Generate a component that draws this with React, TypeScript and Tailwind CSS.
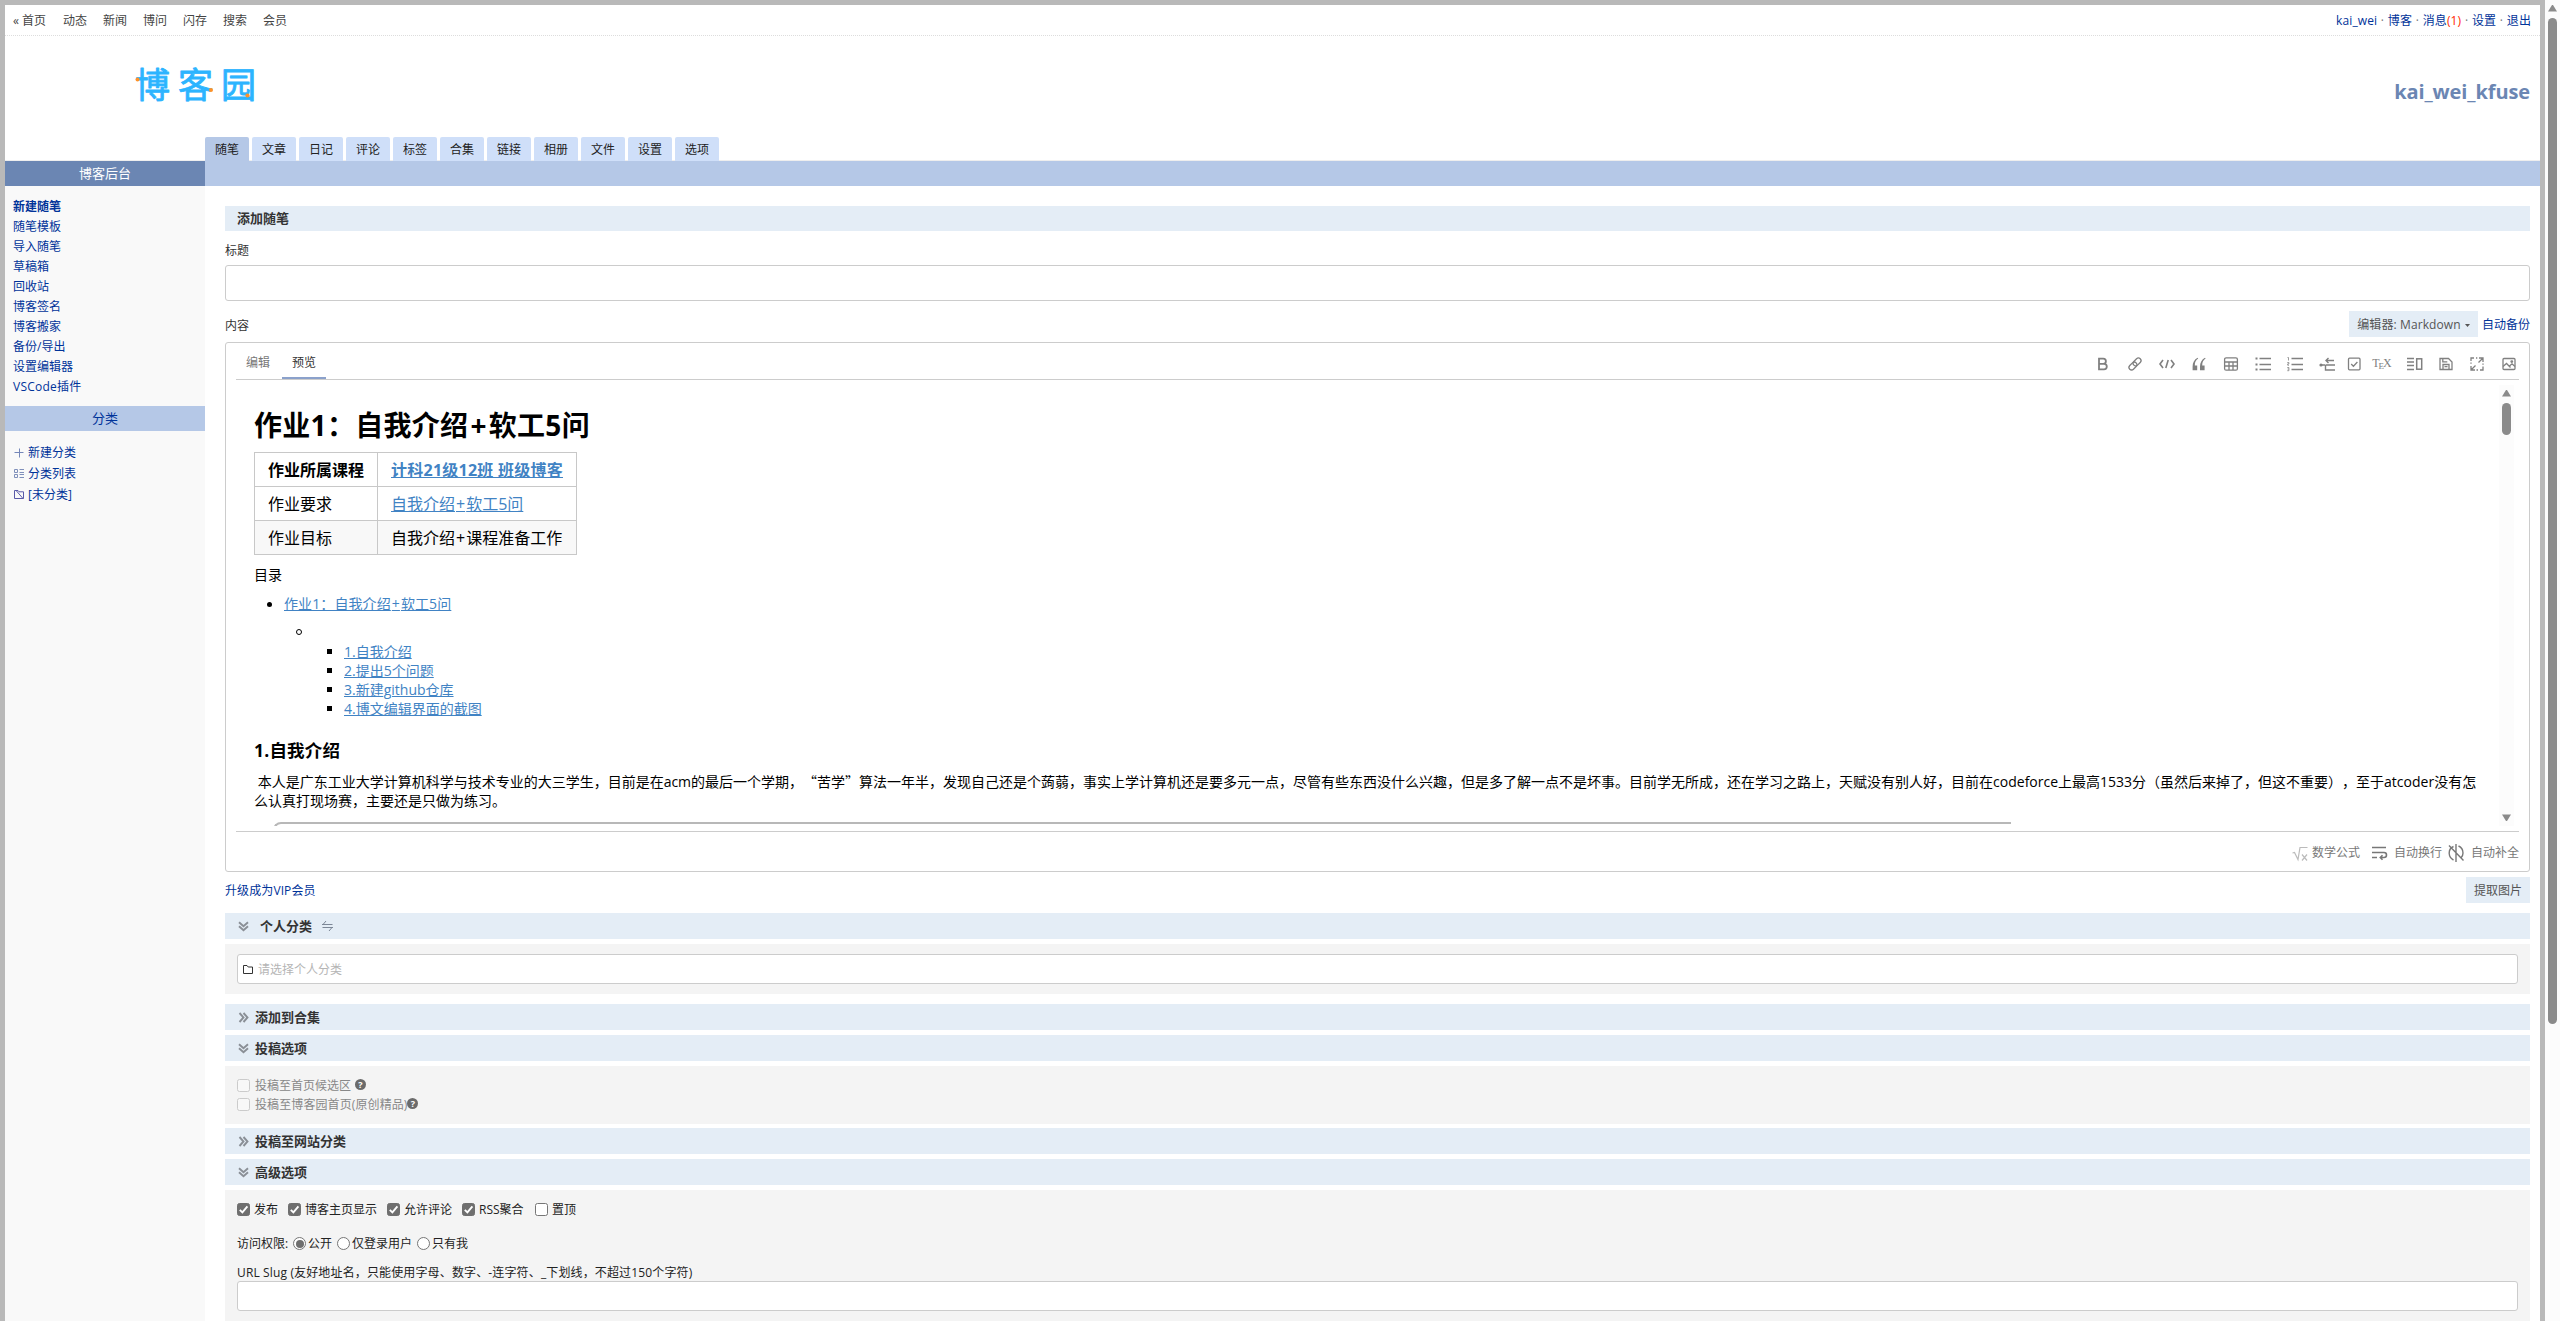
import type { ReactNode } from "react";

const topLinks = ["动态", "新闻", "博问", "闪存", "搜索", "会员"];
const tabs = ["随笔", "文章", "日记", "评论", "标签", "合集", "链接", "相册", "文件", "设置", "选项"];
const sideLinks = ["随笔模板", "导入随笔", "草稿箱", "回收站", "博客签名", "博客搬家", "备份/导出", "设置编辑器", "VSCode插件"];
const toc = ["1.自我介绍", "2.提出5个问题", "3.新建github仓库", "4.博文编辑界面的截图"];

function Icon({ w = 16, h = 16, children, className = "" }: { w?: number; h?: number; children: ReactNode; className?: string }) {
  return (
    <svg
      width={w}
      height={h}
      viewBox={`0 0 ${w} ${h}`}
      fill="none"
      stroke="currentColor"
      strokeWidth="1.3"
      className={`shrink-0 ${className}`}
    >
      {children}
    </svg>
  );
}

function Logo() {
  return (
    <svg width="130" height="64" viewBox="0 -10 130 64" className="-mt-[2px] shrink-0">
      <g
        fill="#2cb4ff"
        stroke="#2cb4ff"
        strokeWidth="0.8"
        strokeLinejoin="round"
        fontSize="35"
        fontWeight="400"
        fontFamily="'Noto Sans CJK SC', sans-serif"
      >
        <text x="2" y="34">博</text>
        <text x="45" y="34">客</text>
        <text x="88" y="34">园</text>
      </g>
      <circle cx="4.5" cy="15.500" r="2" fill="#ff9127" />
      <circle cx="78" cy="26" r="2" fill="#ff9127" />
      <circle cx="114.500" cy="31.500" r="2.100" fill="#ff9127" />
    </svg>
  );
}

function Toolbar() {
  return (
    <div className="flex items-center gap-4 text-[#808080]">
      <Icon>
        <path d="M4 2.600h4.300a2.600 2.600 0 0 1 0 5.200H4zM4 7.800h5a2.800 2.800 0 0 1 0 5.600H4z" strokeWidth="1.800" />
      </Icon>
      <Icon>
        <g transform="rotate(-45 8 8)">
          <rect x="0.600" y="5.400" width="9" height="5.200" rx="2.600" />
          <rect x="6.400" y="5.400" width="9" height="5.200" rx="2.600" />
        </g>
      </Icon>
      <Icon>
        <path d="M4 4 1 8l3 4M12 4l3 4-3 4M9.200 4 6.800 12" strokeWidth="1.600" />
      </Icon>
      <Icon>
        <path
          d="M6.600 1.800C3.200 3.400 1.600 7 1.600 10.400v3.800h4.600V9.600H3.800C3.800 6 5 4 7.200 2.600zM14 1.800C10.600 3.400 9 7 9 10.400v3.800h4.600V9.600h-2.400c0-3.600 1.200-5.600 3.400-7z"
          fill="currentColor"
          stroke="none"
        />
      </Icon>
      <Icon>
        <rect x="1.600" y="1.800" width="12.800" height="12.400" rx="1.500" />
        <path d="M1.600 6h12.800M6 6v8M10 6v8M1.600 10h12.800" />
      </Icon>
      <Icon>
        <path d="M4.500 2.500H16M4.500 8.500H16M4.500 13.500H16" strokeWidth="1.600" />
        <path d="M0.500 2.500h2M0.500 8.500h2M0.500 13.500h2" strokeWidth="2" />
      </Icon>
      <Icon>
        <path d="M4.500 2.500H16M4.500 8.500H16M4.500 13.500H16" strokeWidth="1.600" />
        <path d="M0.500 1.500h1v3M0.300 6.500h1.600v1.400H0.700v1.300H2M0.300 11.500h1.600v3.200H0.300M0.600 13h1.200" strokeWidth="0.800" />
      </Icon>
      <Icon>
        <path d="M2 9h4M6.500 9V14h9.500M6.500 9H16M7 4.500h8M9.500 2 7 4.500 9.500 7" strokeWidth="1.400" />
        <circle cx="2" cy="9" r="1.600" fill="currentColor" stroke="none" />
      </Icon>
      <Icon w={14} className="-ml-[4px]">
        <rect x="1.500" y="2.200" width="11.500" height="11.600" rx="1" />
        <path d="m4.200 8 2.200 2.200 4-4.200" />
      </Icon>
      <span className="-mr-px -ml-[5px] flex w-[20px] items-baseline justify-center pb-px font-['Liberation_Serif',serif] text-[12px] leading-4">
        T<span className="relative top-[2px] -ml-px text-[9px]">E</span>
        <span className="-ml-px">X</span>
      </span>
      <Icon>
        <path d="M0 2.500h7M0 6h7M0 9.500h7M0 13.500h7" strokeWidth="1.500" />
        <rect x="9.700" y="2.800" width="5" height="10.400" strokeWidth="1.500" />
      </Icon>
      <Icon w={14}>
        <path d="M1 2.500h8.500l3.500 3.500v7.500H1zM4 13V8.500h6V13M3.800 2.500v3.300h4.500M5.500 10.700h3" />
      </Icon>
      <Icon>
        <path d="M5 2H2v3M10 2h4v4M14 2 9.500 6.500M2 10v4h4M2 14l4.500-4.500M14 10.500V14h-3M7 2h1.300M14 7.500v1.200M2 6.500v1.300M7.500 14H9" />
      </Icon>
      <Icon>
        <rect x="2" y="2.500" width="12" height="11" rx="1" />
        <path d="M2 10.500l3.500-3 4 4M8.500 10l2.500-2.200 3 2.800" />
        <circle cx="10.800" cy="5.600" r="0.800" />
      </Icon>
    </div>
  );
}

function Chevrons({ open }: { open: boolean }) {
  return (
    <Icon w={11} h={11} className="text-[#8a8f96]">
      {open ? (
        <path d="m1 1.200 4.500 4 4.500-4M1 5.200l4.500 4 4.500-4" strokeWidth="1.900" />
      ) : (
        <path d="m1.500 1 4 4.500-4 4.500M5.500 1l4 4.500-4 4.500" strokeWidth="1.900" />
      )}
    </Icon>
  );
}

function Section({ open, title, className = "", children }: { open: boolean; title: string; className?: string; children?: ReactNode }) {
  return (
    <div className={`flex h-[26px] shrink-0 items-center bg-[#e4edf6] pl-[13px] text-[13px] font-bold text-[#333] ${className}`}>
      <Chevrons open={open} />
      <span className={children ? "ml-[11px]" : "ml-[6px]"}>{title}</span>
      {children}
    </div>
  );
}

function Check({ checked = false, disabled = false }: { checked?: boolean; disabled?: boolean }) {
  return (
    <span
      className={`flex size-[13px] shrink-0 items-center justify-center rounded-[2.500px] border ${
        checked ? "border-[#6f6f6f] bg-[#6f6f6f]" : disabled ? "border-[#cbcbcb] bg-[#f8f8f8]" : "border-[#767676] bg-white"
      }`}
    >
      {checked && (
        <Icon w={11} h={11} className="text-white">
          <path d="m1.800 5.800 2.600 2.600 5-6" strokeWidth="1.900" />
        </Icon>
      )}
    </span>
  );
}

function Radio({ checked = false }: { checked?: boolean }) {
  return (
    <span className="flex size-[13px] shrink-0 items-center justify-center rounded-full border border-[#767676] bg-white">
      {checked && <span className="size-[8px] rounded-full bg-[#6f6f6f]" />}
    </span>
  );
}

function Help() {
  return (
    <span className="mb-[2px] flex size-[11px] shrink-0 items-center justify-center rounded-full bg-[#6b6b6b] text-[9px] leading-none font-bold text-white">
      ?
    </span>
  );
}

function Dot() {
  return <i className="px-[0.500px] text-[#777] not-italic">·</i>;
}

function Arrow({ down = false }: { down?: boolean }) {
  return (
    <svg width="9" height="7" viewBox="0 0 9 7" className="shrink-0">
      <path d={down ? "M0 0.500h9L5 7H4z" : "M0 6.500h9L5 0H4z"} fill="#8b8b8b" />
    </svg>
  );
}

function Preview() {
  return (
    <div className="ml-[18px] flex h-[441px] w-[2260px] flex-col overflow-hidden text-[14px] text-black">
      <h1 className="mt-[20px] h-[40px] shrink-0 text-[28px] leading-[40px] font-bold tracking-[0.300px] whitespace-nowrap">
        作业1：自我介绍<span className="px-[2px]">+</span>软工5问
      </h1>
      <table className="mt-[7px] h-[103px] w-[323px] shrink-0 table-fixed border-collapse text-[16px] leading-[24px] whitespace-nowrap [&_td]:border [&_td]:border-[#c8c8c8] [&_td]:p-0 [&_td]:pl-[13px]">
        <tbody>
          <tr className="h-[34px] font-bold">
            <td className="w-[123px]">作业所属课程</td>
            <td className="tracking-[0.250px] text-[#4183c4] underline">计科21级12班 班级博客</td>
          </tr>
          <tr className="h-[34px]">
            <td>作业要求</td>
            <td className="text-[#4183c4] underline">
              自我介绍<span className="px-px">+</span>软工5问
            </td>
          </tr>
          <tr className="h-[34px] bg-[#f8f8f8]">
            <td>作业目标</td>
            <td>
              自我介绍<span className="px-px">+</span>课程准备工作
            </td>
          </tr>
        </tbody>
      </table>
      <div className="mt-[10px] h-[20px] shrink-0 leading-[20px]">目录</div>
      <div className="mt-[9px] flex h-[20px] shrink-0 items-center pl-[13px]">
        <span className="size-[5px] rounded-full bg-black" />
        <span className="ml-[12px] tracking-[0.100px] text-[#4183c4] underline">
          作业1：自我介绍<span className="px-px">+</span>软工5问
        </span>
      </div>
      <div className="mt-[8px] flex h-[20px] shrink-0 items-center pl-[42px]">
        <span className="size-[6px] rounded-full border border-black" />
      </div>
      {toc.map((t) => (
        <div key={t} className="flex h-[19px] shrink-0 items-center pl-[73px]">
          <span className="size-[5px] bg-black" />
          <span className="ml-[12px] text-[#4183c4] underline">{t}</span>
        </div>
      ))}
      <h3 className="mt-[20px] h-[24px] shrink-0 text-[17.500px] leading-[24px] font-bold tracking-[0.200px]">1.自我介绍</h3>
      <p className="mt-[10px] w-[2244px] shrink-0 leading-[19px] whitespace-nowrap">
        &nbsp;本人是广东工业大学计算机科学与技术专业的大三学生，目前是在acm的最后一个学期，
        <span className="font-['Noto_Sans_CJK_SC',sans-serif]">“苦学”</span>
        算法一年半，发现自己还是个蒟蒻，事实上学计算机还是要多元一点，尽管有些东西没什么兴趣，但是多了解一点不是坏事。目前学无所成，还在学习之路上，天赋没有别人好，目前在codeforce上最高1533分（虽然后来掉了，但这不重要），至于atcoder没有怎
        <br />
        么认真打现场赛，主要还是只做为练习。
      </p>
      <div className="mt-[12px] ml-[19px] h-[40px] w-[1738px] shrink-0 rounded-tl-[8px] border-t-2 border-l-2 border-[#b8b8b8]" />
    </div>
  );
}

export default function App() {
  return (
    <div className="flex h-[1321px] w-[2560px] overflow-hidden bg-white font-['Open_Sans','Noto_Sans_CJK_SC',sans-serif] text-[12px] leading-[16px] text-[#333] [text-spacing-trim:space-all]">
      <div className="flex h-full w-[2545px] flex-col border-t-[5px] border-r-[5px] border-l-[5px] border-[#b9b9b9]">
        <nav className="flex h-[31px] shrink-0 items-center justify-between border-b border-dotted border-[#ddd] pt-[2px] pr-[9px] pl-[8px]">
          <div className="flex gap-[16px] text-[#444]">
            <span className="w-[34px] whitespace-nowrap">« 首页</span>
            {topLinks.map((t) => (
              <span key={t}>{t}</span>
            ))}
          </div>
          <div className="tracking-[0.100px] text-[#039]">
            kai_wei <Dot /> 博客 <Dot /> 消息
            <i className="text-[#ff2a00] not-italic">(1)</i> <Dot /> 设置 <Dot /> 退出
          </div>
        </nav>
        <header className="flex h-[101px] shrink-0 items-center justify-between pr-[10px] pl-[128px]">
          <Logo />
          <span className="mt-[10px] text-[20px] leading-[28px] font-bold tracking-[-0.100px] text-[#6b86b3]">kai_wei_kfuse</span>
        </header>
        <div className="flex h-[24px] shrink-0 gap-[3px] bg-[linear-gradient(#eee,#eee)] bg-[length:100%_1px] bg-bottom bg-no-repeat pl-[200px] text-[#222]">
          {tabs.map((t, i) => (
            <span
              key={t}
              className={`flex w-[44px] items-center justify-center rounded-t-[2px] pt-px ${i === 0 ? "bg-[#b5c8e7]" : "bg-[#cfdff9]"}`}
            >
              {t}
            </span>
          ))}
        </div>
        <div className="flex min-h-0 grow">
          <aside className="flex w-[200px] shrink-0 flex-col bg-[#f9f9f9] text-[#039]">
            <div className="flex h-[25px] items-center justify-center bg-[#6b86b3] pb-px text-[13px] text-white">博客后台</div>
            <div className="mt-[11px] flex flex-col pl-[8px] leading-[20px]">
              <span className="font-bold">新建随笔</span>
              {sideLinks.map((t) => (
                <span key={t} className={t === "VSCode插件" ? "tracking-[0.250px]" : ""}>
                  {t}
                </span>
              ))}
            </div>
            <div className="mt-[9px] flex h-[25px] items-center justify-center bg-[#b5c8e7] pb-px text-[13px]">分类</div>
            <div className="mt-[11px] flex flex-col pl-[9px] leading-[21px]">
              <div className="flex items-center gap-[4px]">
                <Icon w={10} h={10} className="text-[#7486b8]">
                  <path d="M5.500 0.500v9M0.500 4.500h9" strokeWidth="1" />
                </Icon>
                新建分类
              </div>
              <div className="flex items-center gap-[4px]">
                <Icon w={10} h={10} className="text-[#8090bb]">
                  <path d="M0.500 0.500h3v3h-3zM0.500 5.500h3v3h-3zM5.500 0.500h4.500M5.500 3.500h4.500M5.500 5.500h4.500M5.500 8.500h4.500" strokeWidth="1" />
                </Icon>
                分类列表
              </div>
              <div className="flex items-center gap-[4px]">
                <Icon w={10} h={10} className="text-[#5a5aa8]">
                  <path d="M0.500 0.500h3.500l1 1.300h4.500v6.700h-9zM2.500 1l6.500 7.500" strokeWidth="1" />
                </Icon>
                [未分类]
              </div>
            </div>
          </aside>
          <main className="flex min-w-0 grow flex-col">
            <div className="h-[25px] shrink-0 bg-[#b5c8e7]" />
            <div className="flex grow flex-col pr-[10px] pl-[20px]">
              <div className="mt-[20px] flex h-[25px] shrink-0 items-center bg-[#e4edf6] pb-px pl-[12px] text-[13px] font-bold">添加随笔</div>
              <div className="mt-[12px] shrink-0">标题</div>
              <div className="mt-[6px] h-[36px] shrink-0 rounded-[3px] border border-[#ccc]" />
              <div className="mt-[10px] flex h-[26px] shrink-0 items-center">
                <span className="mt-[3px]">内容</span>
                <div className="ml-auto flex h-[26px] w-[129px] items-center justify-center bg-[#e4edf6] pt-[2px] tracking-[0.100px] text-[#555]">
                  编辑器: Markdown
                  <svg width="5" height="3" viewBox="0 0 5 3" className="ml-[4px]">
                    <path d="M0 0h5L2.500 3z" fill="#555" />
                  </svg>
                </div>
                <span className="mt-[2px] ml-[4px] w-[48px] shrink-0 text-[#039]">自动备份</span>
              </div>
              <section className="mt-[5px] flex h-[530px] shrink-0 flex-col rounded-[3px] border border-[#ccc] px-[10px]">
                <div className="flex h-[37px] shrink-0 items-center border-b border-[#ccc] pr-[2px]">
                  <span className="mt-[4px] ml-[10px] text-[#777]">编辑</span>
                  <div className="ml-[12px] flex h-[36px] w-[44px] items-center justify-center self-end border-b-2 border-[#8ba1cb] pt-[6px]">预览</div>
                  <div className="mt-[6px] ml-auto">
                    <Toolbar />
                  </div>
                </div>
                <div className="mt-[5px] flex h-[441px] shrink-0 justify-between pr-[5px]">
                  <Preview />
                  <div className="flex w-[15px] flex-col items-center bg-[#fcfcfc] py-[5px]">
                    <Arrow />
                    <span className="mt-[6px] h-[32px] w-[9px] rounded-full bg-[#8b8b8b]" />
                    <span className="grow" />
                    <Arrow down />
                  </div>
                </div>
                <div className="mt-[5px] flex grow items-center justify-end border-t border-[#ccc] pt-[2px] text-[#777]">
                  <Icon className="mt-[3px] text-[#bbb]">
                    <path d="m0.500 7 2-0.500L6 13.500 8 1.500h7.500M10 8.500l5 6M15 8.500l-5 6" strokeWidth="1.200" />
                  </Icon>
                  <span className="ml-[4px]">数学公式</span>
                  <Icon className="ml-[12px]">
                    <path d="M0 2.500h14M0 7.500h12a2.500 2.500 0 0 1 0 5H8.500M10.500 10.300l-2.200 2.200 2.200 2.200M0 12.500h5" strokeWidth="1.600" />
                  </Icon>
                  <span className="ml-[6px]">自动换行</span>
                  <Icon className="ml-[6px]" h={18}>
                    <path d="M8 0v18M5.500 2.500Q1 4.500 1.200 9.500 1.500 14 5.500 16M10.500 2Q15 4 15 9q0 3-2 5M1 1.500l14.500 15" strokeWidth="1.400" />
                  </Icon>
                  <span className="ml-[7px]">自动补全</span>
                </div>
              </section>
              <div className="mt-[5px] flex h-[26px] shrink-0 items-center justify-between text-[#039]">
                <span className="mt-[2px] tracking-[0.100px]">升级成为VIP会员</span>
                <span className="flex h-full w-[64px] items-center justify-center bg-[#e4edf6] pt-[2px] text-[#555]">提取图片</span>
              </div>
              <Section open title="个人分类" className="mt-[10px]">
                <Icon w={11} h={12} className="ml-[10px] text-[#7c8797]">
                  <path d="M0 4.500h10.500M1 4.500 4 1M0.500 7.500H11M10 7.500l-3 3.500" strokeWidth="1" />
                </Icon>
              </Section>
              <div className="mt-[5px] flex h-[50px] shrink-0 items-center bg-[#f4f4f4] px-[12px]">
                <div className="flex h-[30px] grow items-center rounded-[3px] border border-[#ccc] bg-white pl-[5px] text-[#b5b5b5]">
                  <Icon w={10} h={9} className="text-[#333]">
                    <path d="M0.500 0.500h3.500l1.200 1.500h4.300v6.500h-9z" strokeWidth="1" />
                  </Icon>
                  <span className="mt-px ml-[5px]">请选择个人分类</span>
                </div>
              </div>
              <Section open={false} title="添加到合集" className="mt-[10px]" />
              <Section open title="投稿选项" className="mt-[5px]" />
              <div className="mt-[5px] h-[58px] shrink-0 bg-[#f4f4f4] pt-[10px] pl-[12px] text-[#888]">
                <div className="flex h-[19px] items-center">
                  <Check disabled />
                  <span className="mr-[4px] ml-[5px]">投稿至首页候选区</span>
                  <Help />
                </div>
                <div className="flex h-[19px] items-center">
                  <Check disabled />
                  <span className="ml-[5px] tracking-[0.100px]">投稿至博客园首页(原创精品)</span>
                  <Help />
                </div>
              </div>
              <Section open={false} title="投稿至网站分类" className="mt-[4px]" />
              <Section open title="高级选项" className="mt-[5px]" />
              <div className="mt-[5px] flex grow flex-col bg-[#f4f4f4] px-[12px] pt-[10px] text-[#222]">
                <div className="flex h-[19px] shrink-0 items-center gap-[4px]">
                  <Check checked />
                  <span className="mr-[6px]">发布</span>
                  <Check checked />
                  <span className="mr-[6px]">博客主页显示</span>
                  <Check checked />
                  <span className="mr-[6px]">允许评论</span>
                  <Check checked />
                  <span className="mr-[6px] w-[46px] whitespace-nowrap">RSS聚合</span>
                  <Check />
                  <span>置顶</span>
                </div>
                <div className="mt-[15px] flex h-[19px] shrink-0 items-center">
                  <span className="w-[56px]">访问权限:</span>
                  <Radio checked />
                  <span className="mr-[5px] ml-[2px]">公开</span>
                  <Radio />
                  <span className="mr-[5px] ml-[2px]">仅登录用户</span>
                  <Radio />
                  <span className="ml-[2px]">只有我</span>
                </div>
                <div className="mt-[12px] shrink-0 leading-[16px] tracking-[0.140px]">
                  URL Slug (友好地址名，只能使用字母、数字、-连字符、_下划线，不超过150个字符)
                </div>
                <div className="h-[30px] shrink-0 rounded-[3px] border border-[#ccc] bg-white" />
              </div>
            </div>
          </main>
        </div>
      </div>
      <div className="flex h-full w-[15px] flex-col items-center bg-[#fcfcfc] pt-[5px]">
        <Arrow />
        <span className="mt-[6px] h-[1006px] w-[9px] rounded-full bg-[#8b8b8b]" />
      </div>
    </div>
  );
}
